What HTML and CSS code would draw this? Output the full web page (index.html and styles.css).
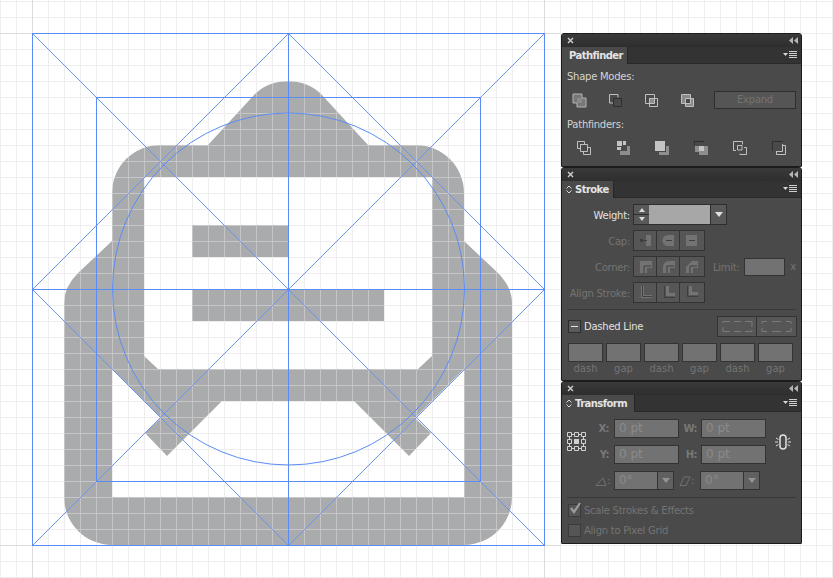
FILE: index.html
```html
<!DOCTYPE html>
<html lang="en">
<head>
  <meta charset="UTF-8">
  <meta name="viewport" content="width=device-width, initial-scale=1.0">
  <title>Mail icon - artboard</title>
  <link rel="stylesheet" href="styles.css">
</head>
<body>
  <svg class="artboard" viewBox="0 0 561 578">
    <defs>
      <pattern id="shapeGrid" x="0" y="1" width="16" height="16" patternUnits="userSpaceOnUse">
        <rect width="16" height="16" fill="#aaabac"/>
        <rect width="1" height="16" fill="#c6c6c7"/>
        <rect width="16" height="1" fill="#c6c6c7"/>
      </pattern>
    </defs>
    <path class="major" d="M32.5 0V578M544.5 0V578M0 33.5H561M0 545.5H561"/>
    <path fill="url(#shapeGrid)" fill-rule="evenodd" d="M254 95A48 48 0 0 1 322 95L368 145H416A48 48 0 0 1 464 193V241L498 273Q512 287 512 303V497A48 48 0 0 1 464 545H112A48 48 0 0 1 64 497V303Q64 287 78 273L112 241V193A48 48 0 0 1 160 145H208Z
      M144 177V356L158 369H418L432 356V177Z
      M112 369V497H464V369L415 418L431 433L409 456L354 401H222L167 456L145 433L161 418Z"/>
    <rect x="192" y="225" width="96" height="32" fill="url(#shapeGrid)"/>
    <rect x="192" y="289" width="192" height="32" fill="url(#shapeGrid)"/>
    <g class="guide-thin">
      <path d="M32.5 33.500L544.500 545.500M544.500 33.500L32.500 545.500M288.500 33.500L544.500 289.500L288.500 545.500L32.500 289.500Z"/>
    </g>
    <g class="guide">
      <rect x="32.5" y="33.5" width="512" height="512"/>
      <rect x="96.5" y="97.5" width="384" height="384"/>
      <path d="M288.5 33V545M32 289.5H544"/>
      <circle cx="288.5" cy="289" r="176"/>
    </g>
  </svg>

  <div class="dock">
    <section class="panel panel-path">
      <div class="titlebar">
        <svg class="close" viewBox="0 0 7 7"><path d="M1 1L6 6M6 1L1 6"/></svg>
        <svg class="collapse" viewBox="0 0 9 7"><path d="M4 0V7L0 3.5ZM9 0V7L5 3.5Z"/></svg>
      </div>
      <div class="tabrow">
        <div class="tab tab-path">Pathfinder</div>
        <svg class="menu" viewBox="0 0 14 8"><path class="menu-arrow" d="M0 2H5L2.500 5Z"/><path class="menu-lines" d="M6 .5H14M6 2.500H14M6 4.500H14M6 6.500H14"/></svg>
      </div>
      <div class="path-body">
        <div class="caption">Shape Modes:</div>
        <div class="mode-row">
          <svg class="ico" viewBox="0 0 18 18"><path class="i-fill" d="M3 3H12V7H16V16H7V12H3Z"/><path class="i-soft" d="M7 7H12V12H7Z"/></svg>
          <svg class="ico" viewBox="0 0 18 18"><path class="i-line" d="M12 6.500V3.500H3.500V12H7"/><path class="i-dark" d="M7.500 7.500H15.500V15.500H7.500Z"/></svg>
          <svg class="ico" viewBox="0 0 18 18"><path class="i-soft" d="M7 7H12V12H7Z"/><path class="i-line" d="M3.500 3.500H12.500V12.500H3.500ZM7.500 7.500H15.500V15.500H7.500Z"/></svg>
          <svg class="ico" viewBox="0 0 18 18"><path class="i-soft" d="M4 4H12V7H7V12H4ZM12 7H15V15H7V12H12Z"/><path class="i-line" d="M3.500 3.500H12.500V12.500H3.500ZM7.500 7.500H15.500V15.500H7.500Z"/></svg>
          <div class="expand">Expand</div>
        </div>
        <div class="caption caption-second">Pathfinders:</div>
        <div class="finder-row">
          <svg class="ico" viewBox="0 0 18 18"><path class="i-line" d="M2.500 2.500H9.500V5.500H5.500V9.500H2.500ZM5.500 5.500H12.500V12.500H5.500ZM12.500 8.500H15.500V15.500H8.500V12.500"/></svg>
          <svg class="ico" viewBox="0 0 18 18"><path class="i-solid" d="M3 2H8V7H3ZM9 2H12V6H9ZM3 8H7V11H3Z"/><path class="i-fill-flat" d="M13 7H16V16H6V12H13Z"/></svg>
          <svg class="ico" viewBox="0 0 18 18"><path class="i-solid" d="M2 2H12V12H2Z"/><path class="i-fill-flat" d="M13 7H16V16H6V13H13Z"/></svg>
          <svg class="ico" viewBox="0 0 18 18"><path class="i-dark" d="M2.500 2.500H12M2.500 2.500V6"/><path class="i-fill-flat" d="M3 7H16V16H7V13H3Z"/><path class="i-solid" d="M7 7H12V12H7Z"/></svg>
          <svg class="ico" viewBox="0 0 18 18"><path class="i-line" d="M2.500 2.500H11.500V5.500M2.500 2.500V11.500H5M9 14.500V15.500H15.500V8.500H13"/><path class="i-line" d="M6.500 6.500H11V11H6.500Z"/></svg>
          <svg class="ico" viewBox="0 0 18 18"><path class="i-dark" d="M2.500 12V2.500H12.500"/><path class="i-line" d="M12.500 5V12.500H6M12.500 6.500H15.500V15.500H6.500V12.500"/></svg>
        </div>
      </div>
    </section>

    <section class="panel panel-stroke">
      <div class="titlebar">
        <svg class="close" viewBox="0 0 7 7"><path d="M1 1L6 6M6 1L1 6"/></svg>
        <svg class="collapse" viewBox="0 0 9 7"><path d="M4 0V7L0 3.5ZM9 0V7L5 3.5Z"/></svg>
      </div>
      <div class="tabrow">
        <div class="tab tab-updown tab-stroke">
          <svg class="updown" viewBox="0 0 6 9"><path d="M.5 3.500L3 1L5.500 3.500M.5 5.500L3 8L5.500 5.500"/></svg>Stroke
        </div>
        <svg class="menu" viewBox="0 0 14 8"><path class="menu-arrow" d="M0 2H5L2.500 5Z"/><path class="menu-lines" d="M6 .5H14M6 2.500H14M6 4.500H14M6 6.500H14"/></svg>
      </div>
      <div class="stroke-body">
        <div class="s-row">
          <span class="s-label s-label-on">Weight:</span>
          <div class="weight">
            <div class="spin"><i class="tri-up"></i><b></b><i class="tri-down"></i></div>
            <div class="weight-value"></div>
            <div class="drop"><i class="tri-drop"></i></div>
          </div>
        </div>
        <div class="s-row">
          <span class="s-label">Cap:</span>
          <div class="seg">
            <div class="seg-btn"><svg viewBox="0 0 21 17"><path class="g-fill" d="M11 3H16V14H11Z"/><path class="g-line" d="M6 8.500H12"/><path class="g-dot" d="M5 7H8V10H5Z"/></svg></div>
            <div class="seg-btn"><svg viewBox="0 0 21 17"><path class="g-fill" d="M16 3H10A5.500 5.500 0 0 0 10 14H16Z"/><path class="g-line" d="M8 8.500H14"/></svg></div>
            <div class="seg-btn"><svg viewBox="0 0 21 17"><path class="g-fill" d="M5 3H16V14H5Z"/><path class="g-line" d="M8 8.500H14"/></svg></div>
          </div>
        </div>
        <div class="s-row">
          <span class="s-label">Corner:</span>
          <div class="seg">
            <div class="seg-btn"><svg viewBox="0 0 21 17"><path class="g-fill" d="M5 15V3H17V10H12V15Z"/><path class="g-line" d="M9 15V8H16"/></svg></div>
            <div class="seg-btn"><svg viewBox="0 0 21 17"><path class="g-fill" d="M5 15V9A6 6 0 0 1 11 3H17V10H12V15Z"/><path class="g-line" d="M9 15V8H16"/></svg></div>
            <div class="seg-btn"><svg viewBox="0 0 21 17"><path class="g-fill" d="M5 15V9L11 3H17V10H12V15Z"/><path class="g-line" d="M9 15V8H16"/></svg></div>
          </div>
          <span class="limit-label">Limit:</span>
          <div class="limit-field"></div>
          <span class="limit-x">x</span>
        </div>
        <div class="s-row">
          <span class="s-label">Align Stroke:</span>
          <div class="seg">
            <div class="seg-btn"><svg viewBox="0 0 21 17"><path class="g-fill" d="M6 2H9V11H17V14H6Z"/><path class="g-line" d="M7.500 2V12.500H17"/></svg></div>
            <div class="seg-btn"><svg viewBox="0 0 21 17"><path class="g-fill" d="M8 2H11V9H17V12H8Z"/><path class="g-line" d="M6.500 2V13.500H17"/></svg></div>
            <div class="seg-btn"><svg viewBox="0 0 21 17"><path class="g-fill" d="M8 2H11V8H17V11H8Z"/><path class="g-line" d="M6.500 2V12.500H17"/></svg></div>
          </div>
        </div>
        <div class="divider"></div>
        <div class="s-row">
          <div class="minus-box"><b></b></div>
          <span class="dashed-label">Dashed Line</span>
          <div class="seg seg-dash">
            <div class="seg-btn"><svg viewBox="0 0 37 17"><path class="g-dash" d="M4 5V3.500H11M15 3.500H22M26 3.500H33V9M4 9V13.500H11M15 13.500H22M26 13.500H33V12"/></svg></div>
            <div class="seg-btn"><svg viewBox="0 0 37 17"><path class="g-dash" d="M4 6V3.500H9M14 3.500H23M28 3.500H33V6M4 10V13.500H9M14 13.500H23M28 13.500H33V10"/></svg></div>
          </div>
        </div>
        <div class="dash-grid">
          <div class="dash-cell"><div class="dash-field"></div><span>dash</span></div>
          <div class="dash-cell"><div class="dash-field"></div><span>gap</span></div>
          <div class="dash-cell"><div class="dash-field"></div><span>dash</span></div>
          <div class="dash-cell"><div class="dash-field"></div><span>gap</span></div>
          <div class="dash-cell"><div class="dash-field"></div><span>dash</span></div>
          <div class="dash-cell"><div class="dash-field"></div><span>gap</span></div>
        </div>
      </div>
    </section>

    <section class="panel panel-transform">
      <div class="titlebar">
        <svg class="close" viewBox="0 0 7 7"><path d="M1 1L6 6M6 1L1 6"/></svg>
        <svg class="collapse" viewBox="0 0 9 7"><path d="M4 0V7L0 3.5ZM9 0V7L5 3.5Z"/></svg>
      </div>
      <div class="tabrow">
        <div class="tab tab-updown tab-transform">
          <svg class="updown" viewBox="0 0 6 9"><path d="M.5 3.500L3 1L5.500 3.500M.5 5.500L3 8L5.500 5.500"/></svg>Transform
        </div>
        <svg class="menu" viewBox="0 0 14 8"><path class="menu-arrow" d="M0 2H5L2.500 5Z"/><path class="menu-lines" d="M6 .5H14M6 2.500H14M6 4.500H14M6 6.500H14"/></svg>
      </div>
      <div class="transform-body">
        <div class="xy-block">
          <svg class="ref-grid" viewBox="0 0 19 19">
            <path class="ref-box" d="M.5 .5H4.500V4.500H.5ZM7.500 .5H11.500V4.500H7.500ZM14.500 .5H18.500V4.500H14.500ZM.5 7.500H4.500V11.500H.5ZM14.500 7.500H18.500V11.500H14.500ZM.5 14.500H4.500V18.500H.5ZM7.500 14.500H11.500V18.500H7.500ZM14.500 14.500H18.500V18.500H14.500Z"/>
            <path class="ref-box" d="M4.500 2.500H7.500M11.500 2.500H14.500M4.500 16.500H7.500M11.500 16.500H14.500M2.500 4.500V7.500M2.500 11.500V14.500M16.500 4.500V7.500M16.500 11.500V14.500"/>
            <path class="ref-mid" d="M7 7H12V12H7Z"/>
          </svg>
          <div class="xy-rows">
            <div class="xy-row">
              <span class="xy-label">X:</span><div class="xy-field">0 pt</div>
              <span class="xy-label xy-label-b">W:</span><div class="xy-field">0 pt</div>
            </div>
            <div class="xy-row">
              <span class="xy-label">Y:</span><div class="xy-field">0 pt</div>
              <span class="xy-label xy-label-b">H:</span><div class="xy-field">0 pt</div>
            </div>
          </div>
          <svg class="link" viewBox="0 0 16 16"><rect class="link-oval" x="5" y="1" width="6" height="14" rx="3"/><path class="link-ray" d="M0 8H3M1 4L3.500 5.500M1 12L3.500 10.500M13 8H16M15 4L12.500 5.500M15 12L12.500 10.500"/></svg>
        </div>
        <div class="angle-row">
          <svg class="angle" viewBox="0 0 12 12"><path d="M1 10.500H11L8 3Z"/></svg><span class="angle-colon">:</span>
          <div class="angle-field"><span>0°</span><div class="drop drop-dim"><i class="tri-drop"></i></div></div>
          <svg class="angle angle-b" viewBox="0 0 12 12"><path d="M1 10.500H7L11 2H5Z"/></svg><span class="angle-colon">:</span>
          <div class="angle-field"><span>0°</span><div class="drop drop-dim"><i class="tri-drop"></i></div></div>
        </div>
        <div class="divider"></div>
        <div class="check-list">
          <div class="check-row">
            <div class="check-box"><svg viewBox="0 0 14 14"><path d="M3 6L6 10L12 1"/></svg></div>
            <span>Scale Strokes &amp; Effects</span>
          </div>
          <div class="check-row">
            <div class="check-box"></div>
            <span>Align to Pixel Grid</span>
          </div>
        </div>
      </div>
    </section>
  </div>
</body>
</html>
```

FILE: styles.css
```css
html, body {
  height: 100%;
}
body {
  margin: 0;
  display: flex;
  overflow: hidden;
  background-color: #fff;
  background-image:
    linear-gradient(to right, #eeeeee 1px, transparent 1px),
    linear-gradient(to bottom, #eeeeee 1px, transparent 1px);
  background-size: 16px 16px;
  background-position: 0 1px;
  font-family: "DejaVu Sans", sans-serif;
  font-size: 10px;
  letter-spacing: -0.25px;
}

/* artboard */
.artboard {
  width: 561px;
  height: 578px;
  flex: none;
  display: block;
}
.major {
  fill: none;
  stroke: #dcdcdc;
}
.guide {
  fill: none;
  stroke: #5b8cf5;
}
.guide-thin {
  fill: none;
  stroke: #6a94ee;
  stroke-width: 1;
  shape-rendering: crispEdges;
}

/* panels */
.dock {
  width: 241px;
  flex: none;
  padding-top: 33px;
}
.panel {
  box-sizing: border-box;
  background: #4a4a4a;
  border: 1px solid #1c1c1c;
  border-radius: 3px 3px 1px 1px;
  color: #d4d4d4;
}
.panel-path { height: 134px; }
.panel-stroke { height: 214px; }
.panel-transform { height: 163px; }

.titlebar {
  height: 13px;
  display: flex;
  align-items: center;
  justify-content: space-between;
  padding: 0 3px 0 5px;
  background: linear-gradient(#3a3a3a, #2e2e2e);
}
.close {
  width: 7px;
  height: 7px;
  fill: none;
  stroke: #d0d0d0;
  stroke-width: 1.4;
}
.collapse {
  width: 9px;
  height: 7px;
  fill: #b5b5b5;
}
.tabrow {
  height: 17px;
  display: flex;
  align-items: center;
  justify-content: space-between;
  padding-right: 4px;
  background: #333333;
  border-bottom: 1px solid #2a2a2a;
  box-sizing: border-box;
}
.tab {
  box-sizing: border-box;
  height: 17px;
  display: flex;
  align-items: center;
  padding: 0 0 0 7px;
  background: #4a4a4a;
  border-right: 1px solid #262626;
  color: #e4e4e4;
  font-weight: bold;
  font-size: 10px;
  letter-spacing: -0.55px;
}
.tab-path { width: 66px; }
.tab-stroke { width: 52px; }
.tab-transform { width: 73px; }
.tab-updown {
  padding-left: 4px;
}
.updown {
  width: 6px;
  height: 9px;
  margin-right: 3px;
  fill: none;
  stroke: #d8d8d8;
}
.menu {
  width: 14px;
  height: 8px;
}
.menu-arrow { fill: #d8d8d8; }
.menu-lines {
  stroke: #cfcfcf;
  fill: none;
}

/* pathfinder */
.path-body {
  padding: 6px 5px 0;
}
.caption {
  height: 14px;
  line-height: 14px;
}
.caption-second {
  margin-top: 9px;
}
.mode-row {
  display: flex;
  height: 18px;
  margin-top: 7px;
  padding-left: 3px;
  gap: 18px;
}
.finder-row {
  display: flex;
  height: 18px;
  margin-top: 7px;
  padding-left: 8px;
  gap: 21px;
}
.ico {
  width: 18px;
  height: 18px;
  flex: none;
}
.ico path {
  stroke-width: 1;
}
.i-fill {
  fill: #777;
  stroke: #b5b5b5;
}
.i-soft { fill: #8a8a8a; }
.i-line {
  fill: none;
  stroke: #c0c0c0;
}
.i-dark {
  fill: none;
  stroke: #2e2e2e;
}
.i-solid { fill: #c4c4c4; }
.i-fill-flat { fill: #8e8e8e; }
.expand {
  box-sizing: border-box;
  width: 84px;
  height: 18px;
  margin-left: auto;
  line-height: 16px;
  text-align: center;
  background: #555;
  border: 1px solid #2f2f2f;
  color: #747474;
}

/* stroke */
.stroke-body {
  display: flex;
  flex-direction: column;
  gap: 7px;
  padding: 7px 5px 0;
}
.s-row {
  display: flex;
  align-items: center;
  height: 19px;
}
.s-label {
  width: 63px;
  margin-right: 4px;
  padding-top: 2px;
  flex: none;
  text-align: right;
  white-space: nowrap;
  color: #747474;
}
.s-label-on {
  color: #e2e2e2;
}
.weight {
  display: flex;
  height: 19px;
  box-shadow: 0 0 0 1px #2e2e2e;
}
.spin {
  width: 15px;
  display: flex;
  flex-direction: column;
  align-items: center;
  justify-content: center;
  gap: 2px;
  background: #585858;
}
.spin b {
  width: 15px;
  height: 1px;
  background: #2e2e2e;
}
.tri-up, .tri-down, .tri-drop {
  display: block;
  width: 0;
  height: 0;
  border-left: 3px solid transparent;
  border-right: 3px solid transparent;
}
.tri-up { border-bottom: 4px solid #d8d8d8; }
.tri-down { border-top: 4px solid #d8d8d8; }
.tri-drop {
  border-left-width: 4px;
  border-right-width: 4px;
  border-top: 5px solid #e0e0e0;
}
.weight-value {
  width: 61px;
  background: #a7a7a7;
}
.drop {
  width: 15px;
  display: flex;
  align-items: center;
  justify-content: center;
  background: #585858;
  border-left: 1px solid #2e2e2e;
}
.seg {
  display: flex;
  height: 19px;
  box-shadow: 0 0 0 1px #333;
}
.seg-btn {
  box-sizing: border-box;
  width: 23px;
  height: 19px;
  padding: 1px;
  background: #565656;
  border-right: 1px solid #333;
}
.seg-btn:last-child {
  width: 24px;
  border-right: 0;
}
.seg-btn svg {
  display: block;
  width: 21px;
  height: 17px;
}
.g-fill { fill: #737373; }
.g-line {
  fill: none;
  stroke: #3e3e3e;
}
.g-dot { fill: #3e3e3e; }
.g-dash {
  fill: none;
  stroke: #7a7a7a;
}
.limit-label {
  margin-left: 9px;
  padding-top: 2px;
  width: 31px;
  flex: none;
  color: #747474;
}
.limit-field {
  box-sizing: border-box;
  width: 42px;
  height: 18px;
  background: #727272;
  border: 1px solid #333;
}
.limit-x {
  margin-left: 5px;
  color: #747474;
}
.divider {
  height: 1px;
  background: #383838;
}
.minus-box {
  box-sizing: border-box;
  width: 13px;
  height: 13px;
  margin-left: 1px;
  padding: 5px 2px 0;
  background: #5a5a5a;
  border: 1px solid #2e2e2e;
}
.minus-box b {
  display: block;
  height: 1px;
  background: #e4e4e4;
}
.dashed-label {
  margin-left: 3px;
  color: #e2e2e2;
}
.seg-dash {
  margin-left: auto;
}
.seg-dash .seg-btn {
  width: 39px;
}
.seg-dash .seg-btn svg {
  width: 37px;
}
.dash-grid {
  display: flex;
  gap: 3px;
  padding-left: 1px;
}
.dash-cell {
  width: 35px;
  text-align: center;
  letter-spacing: 0;
  color: #747474;
}
.dash-field {
  box-sizing: border-box;
  height: 19px;
  margin-bottom: 1px;
  background: #727272;
  border: 1px solid #333;
}

/* transform */
.transform-body {
  padding: 7px 5px 0;
}
.xy-block {
  display: flex;
  align-items: center;
}
.ref-grid {
  width: 19px;
  height: 19px;
  flex: none;
}
.ref-box {
  fill: none;
  stroke: #d0d0d0;
}
.ref-mid { fill: #cfcfcf; }
.xy-rows {
  display: flex;
  flex-direction: column;
  gap: 7px;
}
.xy-row {
  display: flex;
  align-items: center;
  height: 19px;
}
.xy-label {
  width: 23px;
  margin-right: 5px;
  text-align: right;
  font-weight: bold;
  letter-spacing: -0.6px;
  color: #787878;
}
.xy-label-b {
  width: 18px;
  margin-right: 4px;
}
.xy-field {
  box-sizing: border-box;
  width: 65px;
  height: 19px;
  padding-left: 4px;
  line-height: 17px;
  font-size: 12px;
  letter-spacing: 0;
  background: #727272;
  border: 1px solid #333;
  color: #8b8b8b;
}
.link {
  width: 16px;
  height: 16px;
  margin-left: 9px;
}
.link-oval {
  fill: none;
  stroke: #e0e0e0;
  stroke-width: 1.5;
}
.link-ray {
  fill: none;
  stroke: #dcdcdc;
}
.angle-row {
  display: flex;
  align-items: center;
  height: 19px;
  margin-top: 7px;
  padding-left: 28px;
}
.angle {
  width: 12px;
  height: 12px;
  fill: none;
  stroke: #707070;
}
.angle-b {
  margin-left: 5px;
}
.angle-colon {
  width: 4px;
  margin-right: 3px;
  color: #747474;
}
.angle-b + .angle-colon {
  margin-right: 5px;
}
.angle-field {
  box-sizing: border-box;
  display: flex;
  justify-content: space-between;
  width: 60px;
  height: 19px;
  padding-left: 4px;
  line-height: 17px;
  font-size: 12px;
  letter-spacing: 0;
  background: #727272;
  border: 1px solid #333;
  color: #8b8b8b;
}
.drop-dim {
  background: #606060;
  border-left-color: #333;
}
.drop-dim .tri-drop {
  border-top-color: #939393;
}
.transform-body .divider {
  margin-top: 7px;
}
.check-list {
  margin-top: 2px;
}
.check-row {
  display: flex;
  align-items: center;
  height: 20px;
  color: #747474;
}
.check-box {
  box-sizing: border-box;
  width: 13px;
  height: 13px;
  margin: 0 3px 0 1px;
  background: #555;
  border: 1px solid #3a3a3a;
}
.check-box svg {
  display: block;
  width: 14px;
  height: 14px;
  margin: -3px 0 0 -1px;
  fill: none;
  stroke: #9c9c9c;
  stroke-width: 2.2;
}
```
